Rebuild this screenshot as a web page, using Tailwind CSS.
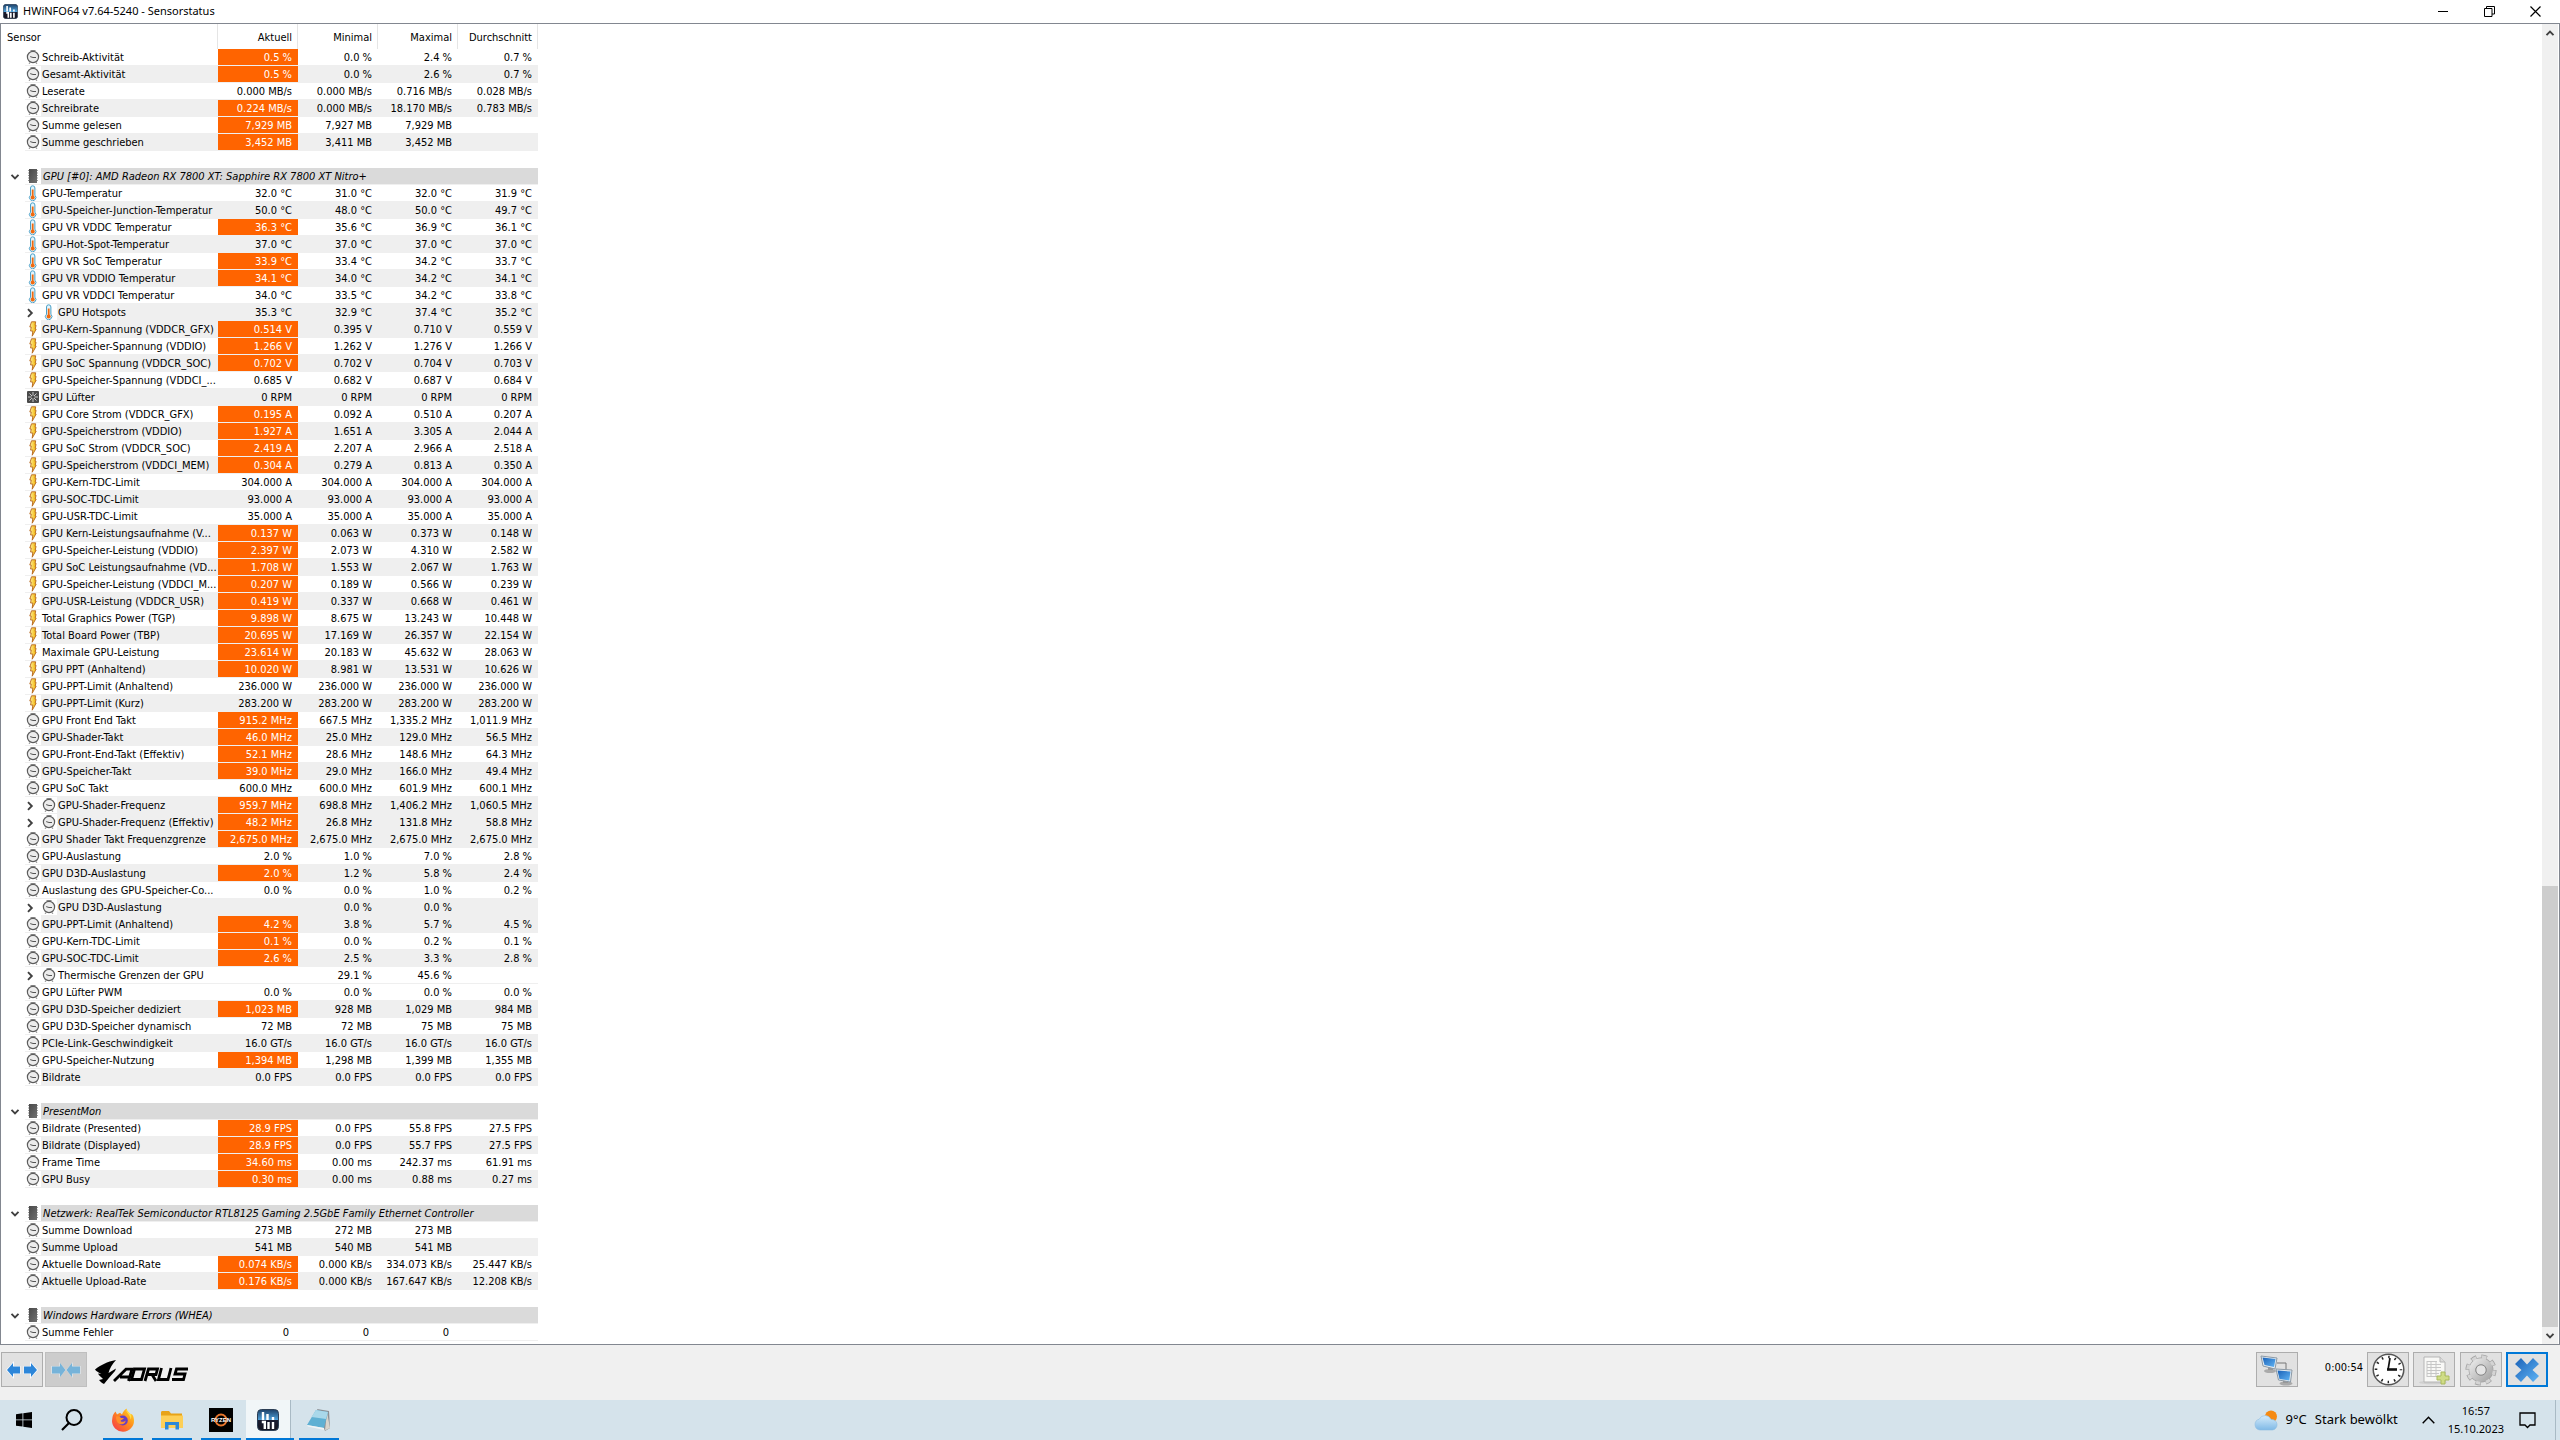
<!DOCTYPE html>
<html lang="de">

<head>
  <meta charset="UTF-8">
  <meta name="viewport" content="width=device-width, initial-scale=1">
  <title>HWiNFO64 v7.64-5240 - Sensorstatus</title>
  <script src="https://cdn.jsdelivr.net/npm/@tailwindcss/browser@4"></script>
</head>

<body class="h-screen flex flex-col overflow-hidden bg-white text-black font-['DejaVu_Sans_Condensed','DejaVu_Sans',sans-serif] text-[11px]">

  <!-- Symbole -->
  <svg class="absolute w-0 h-0" aria-hidden="true">
    <defs>
      <linearGradient id="g-app" x1="0" y1="0" x2="0" y2="1">
        <stop offset="0" stop-color="#1c3f66" />
        <stop offset=".5" stop-color="#4fa3dc" />
        <stop offset=".52" stop-color="#1a1c30" />
        <stop offset="1" stop-color="#14141f" />
      </linearGradient>
      <linearGradient id="g-bolt" x1="0" y1="0" x2="1" y2="0">
        <stop offset="0" stop-color="#fff3a0" />
        <stop offset="1" stop-color="#f2b200" />
      </linearGradient>
      <linearGradient id="g-chip" x1="0" y1="0" x2="1" y2="1">
        <stop offset="0" stop-color="#4a4a4a" />
        <stop offset="1" stop-color="#707070" />
      </linearGradient>
      <linearGradient id="g-blue" x1="0" y1="0" x2="1" y2="1">
        <stop offset="0" stop-color="#1b62b8" />
        <stop offset="1" stop-color="#5fb4f5" />
      </linearGradient>
      <linearGradient id="g-fox" x1="1" y1="0" x2="0" y2="1">
        <stop offset="0" stop-color="#ffe226" />
        <stop offset=".45" stop-color="#ff8a1c" />
        <stop offset="1" stop-color="#f5314f" />
      </linearGradient>
      <linearGradient id="g-cloud" x1="0" y1="0" x2="0" y2="1">
        <stop offset="0" stop-color="#d6ecfb" />
        <stop offset="1" stop-color="#7fb9e6" />
      </linearGradient>
      <linearGradient id="g-gear" x1="0" y1="0" x2="1" y2="1">
        <stop offset="0" stop-color="#e6e6e6" />
        <stop offset="1" stop-color="#a9a9a9" />
      </linearGradient>
      <symbol id="i-clock" viewBox="0 0 14 16">
        <path d="M4.5 1.6h5M3 14.6l1-1M11 14.6l-1-1" stroke="#888" stroke-width="1.2" />
        <circle cx="7" cy="8" r="5.6" fill="#ececec" stroke="#5c5c5c" stroke-width="1.2" />
        <path d="M4.2 7.6l2.8.9h3" fill="none" stroke="#555" stroke-width="1" />
      </symbol>
      <symbol id="i-temp" viewBox="0 0 14 16">
        <path d="M4.5 3a2.2 2.2 0 0 1 4.4 0v7.2a3.2 3.2 0 1 1-4.4 0z" fill="#e4f3fa" stroke="#4aa0c8" stroke-width="1" />
        <path d="M6.7 4.5v7" stroke="#f06a10" stroke-width="1.8" />
        <circle cx="6.7" cy="12.4" r="2" fill="#f06a10" />
      </symbol>
      <symbol id="i-bolt" viewBox="0 0 14 16">
        <path d="M5.5.8h4.2l-.6 3.4 1 .2-.9 3.6 1 .2-4 7 .6-5.200H4.600L5.200 6H3.800z" fill="url(#g-bolt)" stroke="#b5651d" stroke-width=".9" />
      </symbol>
      <symbol id="i-chip" viewBox="0 0 14 16">
        <path d="M2 2.5h10M2 5h10M2 7.5h10M2 10h10M2 12.5h10" stroke="#9a9a9a" stroke-width="1.2" />
        <rect x="3" y="1" width="8" height="14" fill="url(#g-chip)" />
      </symbol>
      <symbol id="i-fan" viewBox="0 0 14 16">
        <rect x="1" y="2" width="12" height="12" rx="1" fill="#4a4a4a" />
        <path d="M7 3v10M2 8h10M3.5 4.5l7 7M10.5 4.5l-7 7" stroke="#c8c8c8" stroke-width="1" />
        <circle cx="7" cy="8" r="1.6" fill="#4a4a4a" />
      </symbol>
      <symbol id="i-down" viewBox="0 0 10 8">
        <path d="M1.5 1.8L5 5.4l3.5-3.6" fill="none" stroke="#404040" stroke-width="1.9" />
      </symbol>
      <symbol id="i-right" viewBox="0 0 8 10">
        <path d="M2 1.2L5.8 5 2 8.8" fill="none" stroke="#404040" stroke-width="1.9" />
      </symbol>
      <symbol id="i-app" viewBox="0 0 22 22">
        <rect x=".5" y=".5" width="21" height="21" rx="4" fill="url(#g-app)" stroke="#2c3f55" />
        <path d="M6 3v8M10.5 5v6M16 8v3" stroke="#fff" stroke-width="2.4" />
        <path d="M4.8 13h3v7M11.500 13v7M16 13v7" stroke="#fff" stroke-width="2.4" fill="none" />
      </symbol>
    </defs>
  </svg>

  <!-- Titelleiste -->
  <header class="h-[23px] shrink-0 flex items-center justify-between font-['Noto_Sans',sans-serif]">
    <div class="flex items-center gap-[5px] pl-[3px]">
      <svg class="w-[15px] h-[15px]"><use href="#i-app" /></svg>
      <h1>HWiNFO64 v7.64-5240 - Sensorstatus</h1>
    </div>
    <div class="flex pr-[2px]">
      <button type="button" aria-label="Minimieren" class="w-[46px] h-5 flex items-center justify-center">
        <svg class="w-[11px] h-[11px]" viewBox="0 0 11 11"><path d="M0 5.5h10" stroke="#000" /></svg>
      </button>
      <button type="button" aria-label="Verkleinern" class="w-[46px] h-5 flex items-center justify-center">
        <svg class="w-[11px] h-[11px]" viewBox="0 0 11 11" fill="none" stroke="#000"><path d="M.5 2.5h7.5v8H.5zM2.5 2.5v-2h8v7.5H8" /></svg>
      </button>
      <button type="button" aria-label="Schließen" class="w-[46px] h-5 flex items-center justify-center">
        <svg class="w-[11px] h-[11px]" viewBox="0 0 11 11"><path d="M.5.5l10 10M10.5.5l-10 10" stroke="#000" stroke-width="1.2" /></svg>
      </button>
    </div>
  </header>

  <!-- Sensorliste -->
  <main class="flex-1 min-h-0 flex justify-between border border-[#828790] pr-px">
    <div class="overflow-hidden">
      <table class="table-fixed border-separate border-spacing-0 w-[537px] leading-[14px]">
        <colgroup>
          <col class="w-[217px]">
          <col class="w-20">
          <col class="w-20">
          <col class="w-20">
          <col class="w-20">
        </colgroup>
        <thead>
          <tr class="h-[25px]">
            <th class="font-normal text-left pt-[2px] pl-[6px] border-r border-[#e5e5e5]">Sensor</th>
            <th class="font-normal text-right pt-[2px] pr-[5px] border-r border-[#e5e5e5]">Aktuell</th>
            <th class="font-normal text-right pt-[2px] pr-[5px] border-r border-[#e5e5e5]">Minimal</th>
            <th class="font-normal text-right pt-[2px] pr-[5px] border-r border-[#e5e5e5]">Maximal</th>
            <th class="font-normal text-right pt-[2px] pr-[5px] border-r border-[#e5e5e5]">Durchschnitt</th>
          </tr>
        </thead>
        <tbody id="sensoren"></tbody>
      </table>
    </div>

    <!-- Bildlaufleiste -->
    <div class="w-4 flex flex-col bg-[#f0f0f0]">
      <button type="button" aria-label="Nach oben" class="h-[17px] flex items-center justify-center">
        <svg class="w-[10px] h-2 rotate-180"><use href="#i-down" /></svg>
      </button>
      <div class="flex-1 flex flex-col justify-end">
        <div class="h-[34.3%] bg-[#cdcdcd]"></div>
      </div>
      <button type="button" aria-label="Nach unten" class="h-[17px] flex items-center justify-center">
        <svg class="w-[10px] h-2"><use href="#i-down" /></svg>
      </button>
    </div>
  </main>

  <!-- Werkzeugleiste -->
  <div class="h-[55px] shrink-0 flex items-start justify-between bg-[#f0f0f0] pt-[7px] pl-px pr-3">
    <div class="flex gap-[2px]">
      <button type="button" aria-label="Spalten erweitern" class="w-[42px] h-[35px] border border-[#adadad] bg-[#e1e1e1] flex items-center justify-center">
        <svg class="w-8 h-[18px]" viewBox="0 0 32 18">
          <path d="M0 9l8-9v5h6.5v8H8v5zM32 9l-8-9v5h-6.5v8H24v5z" fill="#f8fbff" />
          <path d="M1 9l6-7v3.500h7v7H7V16zM31 9l-6-7v3.500h-7v7h7V16z" fill="#2d86d9" />
        </svg>
      </button>
      <button type="button" disabled aria-label="Spalten verkleinern" class="w-[42px] h-[35px] border border-[#bfbfbf] bg-[#cccccc] flex items-center justify-center">
        <svg class="w-8 h-[18px]" viewBox="0 0 32 18">
          <path d="M16 9L9 1v4H1v8h8v4zM16 9l7-8v4h8v8h-8v4z" fill="#d9dfe3" />
          <path d="M15.500 9L10 2v3.500H2v7h8V16zM16.500 9L22 2v3.500h8v7h-8V16z" fill="#76b3d9" />
        </svg>
      </button>
      <svg class="w-[96px] h-6 ml-[5px] mt-2" viewBox="0 0 96 24" role="img" aria-label="AORUS">
        <path d="M1 9.5C7 5 13 1.5 22 0c-3.5 4-6.5 8.5-7.5 13L22 8.5l-1 2.5c-4 4.5-7 8-11 13-2-1-4-2.5-5-4l4-1C7 17 5 15.5 4 13.5l3.5.5C4.5 12.5 2 11 1 9.500z" fill="#000" />
        <g fill="none" stroke="#000" stroke-width="2.8">
          <path d="M20 21L32 9.2h6L34.5 21M26 17h9" />
          <path d="M40.5 9h10l-3 10.5h-10z" />
          <path d="M51 21l3.5-12h9l-1.5 5.5h-9M58 14.5l4 6.5" />
          <path d="M67.5 8l-3 11.5h9.5L77 8" />
          <path d="M94 9H82.5l-1.5 5h10l-1.5 5.5H78" />
        </g>
      </svg>
    </div>

    <div class="flex items-start">
      <button type="button" aria-label="Netzwerk" class="w-[42px] h-[35px] border border-[#adadad] bg-[#e1e1e1] flex items-center justify-center">
        <svg class="w-[34px] h-8" viewBox="0 0 34 32">
          <path d="M17 9h9v8" fill="none" stroke="#777" stroke-width="1" />
          <ellipse cx="10" cy="17" rx="6" ry="2" fill="#aaa" />
          <ellipse cx="26" cy="29.5" rx="6.5" ry="2" fill="#aaa" />
          <path d="M8 12h5v4H8zM23 25h5v4h-5z" fill="#999" />
          <path d="M1 2l16 2-2 11L3 12z" fill="#e8eef2" stroke="#8a98a5" />
          <path d="M2.500 3.500L15.500 5 14 13 4.500 11z" fill="url(#g-blue)" />
          <path d="M16 15l16 1-1.5 12-12-2z" fill="#e8eef2" stroke="#8a98a5" />
          <path d="M17.5 16.5l13 1-1.2 9-9.800-1.500z" fill="url(#g-blue)" />
        </svg>
      </button>
      <span class="w-[69px] pt-2 pr-1 text-right leading-4">0:00:54</span>
      <div class="flex gap-[4px]">
        <button type="button" aria-label="Zurücksetzen" class="w-[42px] h-[35px] border border-[#adadad] bg-[#e1e1e1] flex items-center justify-center">
          <svg class="w-[33px] h-[33px]" viewBox="0 0 33 33">
            <circle cx="16.5" cy="16.5" r="15.3" fill="#fff" stroke="#555" stroke-width="1.5" />
            <circle cx="16.5" cy="16.5" r="12.5" fill="none" stroke="#222" stroke-width="2.6" stroke-dasharray="1.5 5.045" stroke-dashoffset=".7" />
            <path d="M16 17L18 5" stroke="#111" stroke-width="1.7" />
            <path d="M15 16.5h10" stroke="#111" stroke-width="2.6" />
          </svg>
        </button>
        <button type="button" aria-label="Protokoll starten" class="w-[42px] h-[35px] border border-[#adadad] bg-[#e1e1e1] flex items-center justify-center">
          <svg class="w-8 h-8" viewBox="0 0 32 32">
            <ellipse cx="15" cy="28.5" rx="14" ry="1.8" fill="#cfcfcf" />
            <path d="M6 3h16l5 5v20H6z" fill="#f8f8f6" stroke="#b5b5b5" />
            <path d="M22 3v5h5" fill="#ddd" stroke="#b5b5b5" />
            <path d="M9 7.5h10M9 10.5h14M9 13.5h14M9 16.5h14M9 19.5h12M9 22.5h10M9 7v16M13 7v16M18 7v16" stroke="#c6c6c6" fill="none" />
            <path d="M23 18h4v4h4v4h-4v4h-4v-4h-4v-4h4z" fill="#cfdc86" stroke="#a9b95c" />
          </svg>
        </button>
        <button type="button" aria-label="Einstellungen" class="w-[42px] h-[35px] ml-px border border-[#adadad] bg-[#e1e1e1] flex items-center justify-center">
          <svg class="w-8 h-8" viewBox="0 0 32 32">
            <circle cx="16" cy="16" r="13.3" fill="none" stroke="#a2a2a2" stroke-width="4.5" stroke-dasharray="5.5 4.947" />
            <circle cx="16" cy="16" r="8.7" fill="none" stroke="#a2a2a2" stroke-width="7.4" />
            <circle cx="16" cy="16" r="13" fill="none" stroke="#d4d4d4" stroke-width="3.5" stroke-dasharray="4.5 5.711" stroke-dashoffset="-.5" />
            <circle cx="16" cy="16" r="8.7" fill="none" stroke="url(#g-gear)" stroke-width="6" />
            <circle cx="16" cy="16" r="5.2" fill="#e4e4e4" stroke="#8a8a8a" />
          </svg>
        </button>
        <button type="button" aria-label="Beenden" class="w-[42px] h-[35px] border-2 border-[#0078d7] bg-[#e1e1e1] flex items-center justify-center">
          <svg class="w-6 h-6" viewBox="0 0 24 24">
            <path d="M6 0l6 6.5L18 0l6 6-6.5 6 6.5 6-6 6-6-6.5L6 24l-6-6 6.5-6L0 6z" fill="url(#g-blue)" />
          </svg>
        </button>
      </div>
    </div>
  </div>

  <!-- Taskleiste -->
  <footer class="h-10 shrink-0 flex justify-between bg-[#d5e3eb] font-['Noto_Sans',sans-serif]">
    <nav class="flex">
      <button type="button" aria-label="Start" class="w-12 flex items-center justify-center">
        <svg class="w-4 h-4" viewBox="0 0 16 16"><path d="M0 2.2l6.5-.9v6.2H0zM7.3 1.2L16 0v7.500H7.300zM0 8.300h6.500v6.300L0 13.700zM7.300 8.300H16V16l-8.700-1.200z" /></svg>
      </button>
      <button type="button" aria-label="Suchen" class="w-12 flex items-center justify-center">
        <svg class="w-[22px] h-[22px]" viewBox="0 0 22 22" fill="none" stroke="#000" stroke-width="2"><circle cx="13" cy="8.5" r="7.5" /><path d="M8 14l-7 7" stroke-width="2.2" /></svg>
      </button>
      <div class="flex gap-[9px] ml-[7px]">
        <button type="button" aria-label="Firefox" class="w-10 border-b-2 border-[#0078d7] flex items-center justify-center">
          <svg class="w-6 h-6 mt-[2px]" viewBox="0 0 24 24">
            <path d="M1.5 9C2 6.5 3 5 4.5 3.5L6 6.5 9 4.8l2 1.700C12 3.500 14 1.500 15.500.5c.5 2.500 2 3.500 4 5.500C21.500 5.500 23 9 23 12.500A11 11 0 0 1 1 13z" fill="url(#g-fox)" />
            <circle cx="11.8" cy="12.5" r="5" fill="#6a3fc0" />
            <path d="M5 8.500c2.500-.8 4 .2 5 1.500h3c-1 2-3 1.500-3.500 3 1.500 1.500 4 .8 5-.5.500 3.500-5 5-7.500 2.500C5.500 13 5 11 5 8.500z" fill="#ff8f2a" />
            <path d="M15 1.500c0 3 4.500 5 4.500 10 1-1 1-3.500.5-5-1.500-2-4-3-5-5z" fill="#ffe14a" />
          </svg>
        </button>
        <button type="button" aria-label="Explorer" class="w-10 border-b-2 border-[#0078d7] flex items-center justify-center">
          <svg class="w-[22px] h-[19px] mt-[2px]" viewBox="0 0 22 19">
            <path d="M0 1.500C0 .7.500 0 1.500 0H8l2 2.500h11v4H0z" fill="#e8a317" />
            <path d="M0 4.500h22V17H0z" fill="#fdcf57" />
            <path d="M4 18.500V11h14v7.500h-3.500V14h-7v4.500z" fill="#2b88d8" />
          </svg>
        </button>
        <button type="button" aria-label="Ryzen Master" class="w-10 border-b-2 border-[#0078d7] flex items-center justify-center">
          <svg class="w-6 h-6 mt-[2px]" viewBox="0 0 24 24">
            <rect width="24" height="24" />
            <circle cx="12" cy="12" r="5.5" fill="none" stroke="#e8762d" stroke-width="2" />
            <text x="12" y="14" text-anchor="middle" fill="#fff" class="text-[6px] font-bold font-['Liberation_Sans',sans-serif]">RYZEN</text>
          </svg>
        </button>
      </div>
      <button type="button" aria-label="HWiNFO64" class="w-[48px] ml-[5px] border-b-2 border-[#0078d7] flex">
        <span class="w-[45px] h-full bg-[#f1f6f8] border-r border-[#a9bac4] flex items-center justify-center">
          <svg class="w-[22px] h-[22px] mt-[2px]"><use href="#i-app" /></svg>
        </span>
      </button>
      <button type="button" aria-label="Editor" class="w-10 ml-[5px] border-b-2 border-[#0078d7] flex items-center justify-center">
        <svg class="w-6 h-[22px] mt-[2px]" viewBox="0 0 24 22">
          <path d="M10 0l12 2 1 17-5 3z" fill="#8b8f94" />
          <path d="M20 3l3 16-5 2.500z" fill="#d8d4cc" />
          <path d="M9 1l12 2-4 16L0 16z" fill="#5fb0d3" />
          <path d="M9 1l12 2-2 7L4.500 8z" fill="#a9d8ea" />
          <path d="M0 16l17 3v2L1 17.500z" fill="#f1f4f5" />
        </svg>
      </button>
    </nav>

    <div class="flex items-center pr-1">
      <button type="button" class="flex items-center text-[13px]">
        <svg class="w-6 h-[21px] mr-2" viewBox="0 0 24 21">
          <circle cx="17" cy="6.5" r="6" fill="#f58a12" />
          <path d="M6 20a5.500 5.500 0 0 1-.8-10.800A6.500 6.500 0 0 1 17 9.500 5.300 5.300 0 1 1 18.500 20z" fill="url(#g-cloud)" stroke="#8dbce0" stroke-width=".6" />
        </svg>
        <span class="mr-2">9°C</span>
        <span>Stark bewölkt</span>
      </button>
      <button type="button" aria-label="Ausgeblendete Symbole" class="w-[50px] h-full pl-3 flex items-center justify-center">
        <svg class="w-[13px] h-2" viewBox="0 0 13 8"><path d="M.7 7.2l5.800-6 5.800 6" fill="none" stroke="#000" stroke-width="1.4" /></svg>
      </button>
      <button type="button" class="text-center leading-[18px]">
        <span class="block">16:57</span>
        <span class="block">15.10.2023</span>
      </button>
      <button type="button" aria-label="Info-Center" class="h-full w-[52px] pr-1 border-r border-[#a9bac4] flex items-center justify-center">
        <svg class="w-[17px] h-[17px]" viewBox="0 0 17 17"><path d="M1 1h15v12h-5l-2.500 2.500L6 13H1z" fill="none" stroke="#000" stroke-width="1.3" /></svg>
      </button>
    </div>
  </footer>

  <script>
    // Flags: g = graue Zeile, o = Aktuell hervorgehoben, c = aufklappbare Unterzeile
    const daten = [
      ['clock', 'o', 'Schreib-Aktivität', '0.5 %', '0.0 %', '2.4 %', '0.7 %'],
      ['clock', 'go', 'Gesamt-Aktivität', '0.5 %', '0.0 %', '2.6 %', '0.7 %'],
      ['clock', '', 'Leserate', '0.000 MB/s', '0.000 MB/s', '0.716 MB/s', '0.028 MB/s'],
      ['clock', 'go', 'Schreibrate', '0.224 MB/s', '0.000 MB/s', '18.170 MB/s', '0.783 MB/s'],
      ['clock', 'o', 'Summe gelesen', '7,929 MB', '7,927 MB', '7,929 MB', ''],
      ['clock', 'go', 'Summe geschrieben', '3,452 MB', '3,411 MB', '3,452 MB', ''],
      ['gruppe', 'GPU [#0]: AMD Radeon RX 7800 XT: Sapphire RX 7800 XT Nitro+'],
      ['temp', '', 'GPU-Temperatur', '32.0 °C', '31.0 °C', '32.0 °C', '31.9 °C'],
      ['temp', 'g', 'GPU-Speicher-Junction-Temperatur', '50.0 °C', '48.0 °C', '50.0 °C', '49.7 °C'],
      ['temp', 'o', 'GPU VR VDDC Temperatur', '36.3 °C', '35.6 °C', '36.9 °C', '36.1 °C'],
      ['temp', 'g', 'GPU-Hot-Spot-Temperatur', '37.0 °C', '37.0 °C', '37.0 °C', '37.0 °C'],
      ['temp', 'o', 'GPU VR SoC Temperatur', '33.9 °C', '33.4 °C', '34.2 °C', '33.7 °C'],
      ['temp', 'go', 'GPU VR VDDIO Temperatur', '34.1 °C', '34.0 °C', '34.2 °C', '34.1 °C'],
      ['temp', '', 'GPU VR VDDCI Temperatur', '34.0 °C', '33.5 °C', '34.2 °C', '33.8 °C'],
      ['temp', 'gc', 'GPU Hotspots', '35.3 °C', '32.9 °C', '37.4 °C', '35.2 °C'],
      ['bolt', 'go', 'GPU-Kern-Spannung (VDDCR_GFX)', '0.514 V', '0.395 V', '0.710 V', '0.559 V'],
      ['bolt', 'o', 'GPU-Speicher-Spannung (VDDIO)', '1.266 V', '1.262 V', '1.276 V', '1.266 V'],
      ['bolt', 'go', 'GPU SoC Spannung (VDDCR_SOC)', '0.702 V', '0.702 V', '0.704 V', '0.703 V'],
      ['bolt', '', 'GPU-Speicher-Spannung (VDDCI_...', '0.685 V', '0.682 V', '0.687 V', '0.684 V'],
      ['fan', 'g', 'GPU Lüfter', '0 RPM', '0 RPM', '0 RPM', '0 RPM'],
      ['bolt', 'o', 'GPU Core Strom (VDDCR_GFX)', '0.195 A', '0.092 A', '0.510 A', '0.207 A'],
      ['bolt', 'go', 'GPU-Speicherstrom (VDDIO)', '1.927 A', '1.651 A', '3.305 A', '2.044 A'],
      ['bolt', 'o', 'GPU SoC Strom (VDDCR_SOC)', '2.419 A', '2.207 A', '2.966 A', '2.518 A'],
      ['bolt', 'go', 'GPU-Speicherstrom (VDDCI_MEM)', '0.304 A', '0.279 A', '0.813 A', '0.350 A'],
      ['bolt', '', 'GPU-Kern-TDC-Limit', '304.000 A', '304.000 A', '304.000 A', '304.000 A'],
      ['bolt', 'g', 'GPU-SOC-TDC-Limit', '93.000 A', '93.000 A', '93.000 A', '93.000 A'],
      ['bolt', '', 'GPU-USR-TDC-Limit', '35.000 A', '35.000 A', '35.000 A', '35.000 A'],
      ['bolt', 'go', 'GPU Kern-Leistungsaufnahme (V...', '0.137 W', '0.063 W', '0.373 W', '0.148 W'],
      ['bolt', 'o', 'GPU-Speicher-Leistung (VDDIO)', '2.397 W', '2.073 W', '4.310 W', '2.582 W'],
      ['bolt', 'go', 'GPU SoC Leistungsaufnahme (VD...', '1.708 W', '1.553 W', '2.067 W', '1.763 W'],
      ['bolt', 'o', 'GPU-Speicher-Leistung (VDDCI_M...', '0.207 W', '0.189 W', '0.566 W', '0.239 W'],
      ['bolt', 'go', 'GPU-USR-Leistung (VDDCR_USR)', '0.419 W', '0.337 W', '0.668 W', '0.461 W'],
      ['bolt', 'o', 'Total Graphics Power (TGP)', '9.898 W', '8.675 W', '13.243 W', '10.448 W'],
      ['bolt', 'go', 'Total Board Power (TBP)', '20.695 W', '17.169 W', '26.357 W', '22.154 W'],
      ['bolt', 'o', 'Maximale GPU-Leistung', '23.614 W', '20.183 W', '45.632 W', '28.063 W'],
      ['bolt', 'go', 'GPU PPT (Anhaltend)', '10.020 W', '8.981 W', '13.531 W', '10.626 W'],
      ['bolt', '', 'GPU-PPT-Limit (Anhaltend)', '236.000 W', '236.000 W', '236.000 W', '236.000 W'],
      ['bolt', 'g', 'GPU-PPT-Limit (Kurz)', '283.200 W', '283.200 W', '283.200 W', '283.200 W'],
      ['clock', 'o', 'GPU Front End Takt', '915.2 MHz', '667.5 MHz', '1,335.2 MHz', '1,011.9 MHz'],
      ['clock', 'go', 'GPU-Shader-Takt', '46.0 MHz', '25.0 MHz', '129.0 MHz', '56.5 MHz'],
      ['clock', 'o', 'GPU-Front-End-Takt (Effektiv)', '52.1 MHz', '28.6 MHz', '148.6 MHz', '64.3 MHz'],
      ['clock', 'go', 'GPU-Speicher-Takt', '39.0 MHz', '29.0 MHz', '166.0 MHz', '49.4 MHz'],
      ['clock', '', 'GPU SoC Takt', '600.0 MHz', '600.0 MHz', '601.9 MHz', '600.1 MHz'],
      ['clock', 'goc', 'GPU-Shader-Frequenz', '959.7 MHz', '698.8 MHz', '1,406.2 MHz', '1,060.5 MHz'],
      ['clock', 'goc', 'GPU-Shader-Frequenz (Effektiv)', '48.2 MHz', '26.8 MHz', '131.8 MHz', '58.8 MHz'],
      ['clock', 'go', 'GPU Shader Takt Frequenzgrenze', '2,675.0 MHz', '2,675.0 MHz', '2,675.0 MHz', '2,675.0 MHz'],
      ['clock', '', 'GPU-Auslastung', '2.0 %', '1.0 %', '7.0 %', '2.8 %'],
      ['clock', 'go', 'GPU D3D-Auslastung', '2.0 %', '1.2 %', '5.8 %', '2.4 %'],
      ['clock', '', 'Auslastung des GPU-Speicher-Co...', '0.0 %', '0.0 %', '1.0 %', '0.2 %'],
      ['clock', 'gc', 'GPU D3D-Auslastung', '', '0.0 %', '0.0 %', ''],
      ['clock', 'go', 'GPU-PPT-Limit (Anhaltend)', '4.2 %', '3.8 %', '5.7 %', '4.5 %'],
      ['clock', 'o', 'GPU-Kern-TDC-Limit', '0.1 %', '0.0 %', '0.2 %', '0.1 %'],
      ['clock', 'go', 'GPU-SOC-TDC-Limit', '2.6 %', '2.5 %', '3.3 %', '2.8 %'],
      ['clock', 'c', 'Thermische Grenzen der GPU', '', '29.1 %', '45.6 %', ''],
      ['clock', '', 'GPU Lüfter PWM', '0.0 %', '0.0 %', '0.0 %', '0.0 %'],
      ['clock', 'go', 'GPU D3D-Speicher dediziert', '1,023 MB', '928 MB', '1,029 MB', '984 MB'],
      ['clock', '', 'GPU D3D-Speicher dynamisch', '72 MB', '72 MB', '75 MB', '75 MB'],
      ['clock', 'g', 'PCIe-Link-Geschwindigkeit', '16.0 GT/s', '16.0 GT/s', '16.0 GT/s', '16.0 GT/s'],
      ['clock', 'o', 'GPU-Speicher-Nutzung', '1,394 MB', '1,298 MB', '1,399 MB', '1,355 MB'],
      ['clock', 'g', 'Bildrate', '0.0 FPS', '0.0 FPS', '0.0 FPS', '0.0 FPS'],
      ['gruppe', 'PresentMon'],
      ['clock', 'o', 'Bildrate (Presented)', '28.9 FPS', '0.0 FPS', '55.8 FPS', '27.5 FPS'],
      ['clock', 'go', 'Bildrate (Displayed)', '28.9 FPS', '0.0 FPS', '55.7 FPS', '27.5 FPS'],
      ['clock', 'o', 'Frame Time', '34.60 ms', '0.00 ms', '242.37 ms', '61.91 ms'],
      ['clock', 'go', 'GPU Busy', '0.30 ms', '0.00 ms', '0.88 ms', '0.27 ms'],
      ['gruppe', 'Netzwerk: RealTek Semiconductor RTL8125 Gaming 2.5GbE Family Ethernet Controller'],
      ['clock', '', 'Summe Download', '273 MB', '272 MB', '273 MB', ''],
      ['clock', 'g', 'Summe Upload', '541 MB', '540 MB', '541 MB', ''],
      ['clock', 'o', 'Aktuelle Download-Rate', '0.074 KB/s', '0.000 KB/s', '334.073 KB/s', '25.447 KB/s'],
      ['clock', 'go', 'Aktuelle Upload-Rate', '0.176 KB/s', '0.000 KB/s', '167.647 KB/s', '12.208 KB/s'],
      ['gruppe', 'Windows Hardware Errors (WHEA)'],
      ['clock', '', 'Summe Fehler', '0', '0', '0', '']
    ];

    function gruppe(name) {
      return `
        <tr class="h-[17px]"><td colspan="5" class="p-0"></td></tr>
        <tr class="h-[17px]">
          <td colspan="5" class="p-0">
            <div class="flex h-[17px]">
              <button type="button" aria-label="Gruppe zuklappen" class="w-6 pl-[3px] flex items-center justify-center"><svg class="w-[10px] h-2"><use href="#i-down" /></svg></button>
              <span class="w-4 pl-px border-b border-[#efefef]"><svg class="w-[14px] h-4"><use href="#i-chip" /></svg></span>
              <span class="flex-1 pt-[2px] pl-[2px] bg-[#dadada] italic whitespace-nowrap border-b border-[#efefef]">${name}</span>
            </div>
          </td>
        </tr>`;
    }

    function zeile([icon, flags, name, ...werte]) {
      const grau = flags.includes('g') ? 'bg-[#efefef]' : 'bg-white';
      const pfeil = flags.includes('c')
        ? `<button type="button" aria-label="Aufklappen" class="w-4 pl-px flex items-center"><svg class="w-2 h-[10px]"><use href="#i-right" /></svg></button>`
        : '';
      const zellen = werte.map((wert, i) => {
        const farbe = i === 0 && flags.includes('o') ? 'bg-[#ff6400] text-white' : grau;
        const rand = wert === '0' ? 'pr-[9px]' : 'pr-[6px]';
        return `<td class="p-0 pt-[2px] ${rand} ${farbe} text-right whitespace-nowrap border-b border-[#efefef]">${wert}</td>`;
      }).join('');
      return `
        <tr class="h-[17px]">
          <td class="p-0">
            <div class="flex h-[17px] pl-6">
              ${pfeil}
              <span class="w-4 pl-px border-b border-[#efefef]"><svg class="w-[14px] h-4"><use href="#i-${icon}" /></svg></span>
              <span class="flex-1 min-w-0 pt-[2px] pl-px ${grau} whitespace-nowrap overflow-hidden border-b border-[#efefef]">${name}</span>
            </div>
          </td>
          ${zellen}
        </tr>`;
    }

    document.getElementById('sensoren').innerHTML = daten
      .map(d => d[0] === 'gruppe' ? gruppe(d[1]) : zeile(d))
      .join('');
  </script>

</body>

</html>
